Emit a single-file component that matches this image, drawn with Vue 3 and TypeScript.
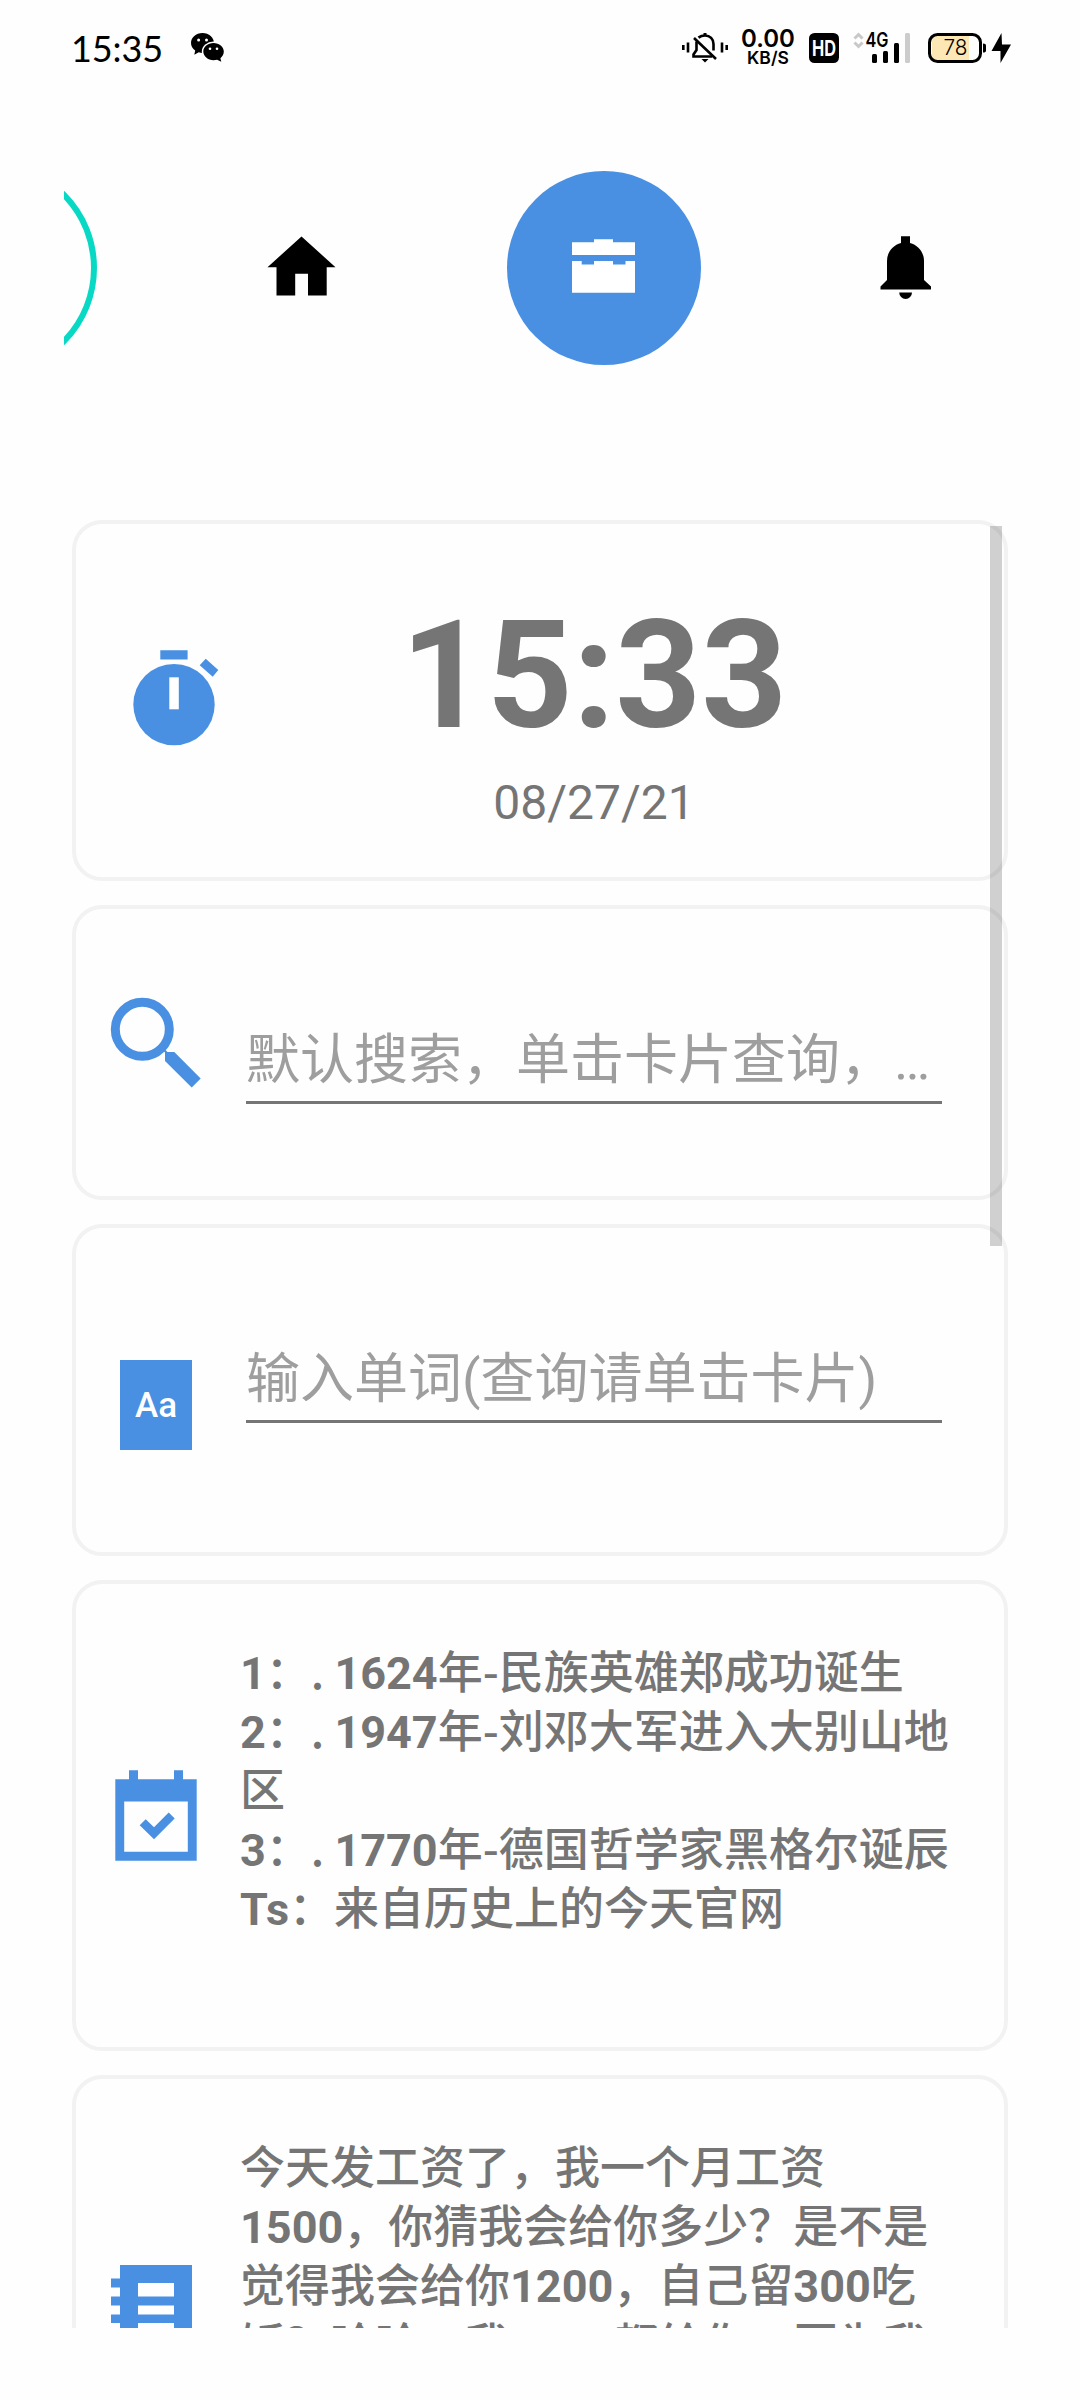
<script setup lang="ts">
interface Segment {
  text: string
  strong: boolean
}

// Latin letters and digits are set bold, everything else keeps the medium CJK face.
function segments(line: string): Segment[] {
  return (line.match(/[A-Za-z0-9]+|[^A-Za-z0-9]+/g) ?? []).map((text) => ({
    text,
    strong: /[A-Za-z0-9]/.test(text),
  }))
}

const history: Segment[][] = [
  '1：. 1624年-民族英雄郑成功诞生',
  '2：. 1947年-刘邓大军进入大别山地',
  '区',
  '3：. 1770年-德国哲学家黑格尔诞辰',
  'Ts：来自历史上的今天官网',
].map(segments)

const joke: Segment[][] = [
  '今天发工资了，我一个月工资',
  '1500，你猜我会给你多少？是不是',
  '觉得我会给你1200，自己留300吃',
  '饭？哈哈，我1500都给你，因为我',
].map(segments)
</script>

<template>
  <div class="screen">
    <header class="status">
      <span class="clock">15:35</span>
      <svg class="wechat" width="36" height="32" viewBox="0 0 36 32">
        <path d="M12.500 1C6 1 1 5.500 1 11c0 3.200 1.600 5.800 4.200 7.600L4.300 22.800 8.800 20.300c1.200.4 2.400.6 3.700.6C19 20.900 24 16.400 24 11S19 1 12.500 1z" />
        <ellipse cx="23.500" cy="19.600" rx="11.700" ry="10" fill="#fff" />
        <path d="M23.500 11c-5.700 0-10.200 3.800-10.200 8.600s4.500 8.600 10.200 8.600c1.300 0 2.500-.2 3.600-.5l4.200 2-.9-3.500c2.100-1.600 3.400-3.900 3.400-6.600 0-4.800-4.600-8.600-10.300-8.600z" />
        <g fill="#fff">
          <circle cx="8.600" cy="8" r="1.500" /><circle cx="16.500" cy="8" r="1.500" />
          <circle cx="20" cy="16.800" r="1.300" /><circle cx="27" cy="16.800" r="1.300" />
        </g>
      </svg>

      <div class="indicators">
        <svg class="silent" width="46" height="32" viewBox="0 0 46 32">
          <g fill="none" stroke="#000" stroke-width="2.600">
            <path d="M1.300 13v5M6 10.500v10M40 10.500v10M44.700 13v5" />
            <path d="M16.500 5.600C18.300 4.200 20.500 3.500 23 3.500c5 0 8.500 3.600 8.500 8.500v6.500" />
            <path d="M14.500 9.500v8.500L11.500 22.500v2H30" />
            <path d="M12 6l22 21" />
          </g>
          <path d="M21.500 1h3v3h-3zM19.500 27h7l-3.500 3.500z" />
        </svg>
        <div class="speed"><b>0.00</b><i>KB/S</i></div>
        <svg class="hd" width="30" height="30" viewBox="0 0 30 30">
          <rect width="30" height="30" rx="5.500" />
          <text x="15" y="23" text-anchor="middle" textLength="24" lengthAdjust="spacingAndGlyphs" fill="#fff" font-size="22" font-weight="700">HD</text>
        </svg>
        <svg class="signal" width="58" height="34" viewBox="0 0 58 34">
          <path d="M1.500 7.500L5.500 3.500l4 4M1.500 11.500l4 4 4-4" fill="none" stroke="#c8c8c8" stroke-width="3" />
          <text x="12.500" y="16" textLength="23" lengthAdjust="spacingAndGlyphs" font-size="20" font-weight="600">4G</text>
          <rect x="19" y="23" width="5" height="9" rx="1.500" />
          <rect x="30" y="20" width="5" height="12" rx="1.500" />
          <rect x="41" y="12" width="5" height="20" rx="1.500" />
          <rect x="52" y="2" width="5" height="30" rx="1.500" fill="#ccc" />
        </svg>
        <svg class="battery" width="84" height="34" viewBox="0 0 84 34">
          <path d="M10 4h31v26H10a6 6 0 0 1-6-6V10a6 6 0 0 1 6-6z" fill="#fde7b5" />
          <rect x="1.500" y="3.500" width="51" height="27" rx="8" fill="none" stroke="#000" stroke-width="3" />
          <path d="M55 12.500q3 0 3 2v5q0 2-3 2z" />
          <text x="15.500" y="24" textLength="24" lengthAdjust="spacingAndGlyphs" font-size="21" font-weight="300">78</text>
          <path d="M73.500 2L63.500 20h9v12L83 13.500h-9z" />
        </svg>
      </div>
    </header>

    <nav class="tabs">
      <div class="tab first">
        <svg width="87" height="194" viewBox="0 0 87 194">
          <circle cx="-74" cy="97" r="104" fill="none" stroke="#08d9c4" stroke-width="6" />
        </svg>
      </div>
      <div class="tab">
        <svg width="96" height="96" viewBox="0 0 96 96">
          <path d="M47.500 16.500L81.500 47.200H72.700V75.600H54V53.700H41.200V75.600H22.500V47.200H13.500z" />
        </svg>
      </div>
      <div class="tab">
        <div class="bubble">
          <svg width="96" height="96" viewBox="0 0 96 96" fill="#fff">
            <path d="M16 22.300H38V19.300H57V22.300H79V35H16z" />
            <path d="M16 41H25.700V44.400H38V41H57V44.400H69.500V41H79V72.800H16z" />
          </svg>
        </div>
      </div>
      <div class="tab">
        <svg width="96" height="96" viewBox="0 0 96 96">
          <path d="M43 16.300H52V22.900C60 25 66 32 66 41V60L73 66.500V69.500H22.500V66.500L29 60V41C29 32 35 25 43 22.900z" />
          <path d="M41.200 72.500H54A6.400 6.400 0 0 1 41.200 72.500z" />
        </svg>
      </div>
    </nav>

    <main class="list">
      <section class="card card-time">
        <svg class="icon" width="108" height="108" viewBox="0 0 108 108">
          <path d="M40.300 10.300h27.300v9.200H40.300zM85.700 18.700L98.300 30l-5.600 6.700L79.700 25.300z" />
          <circle cx="54" cy="64.600" r="40.700" />
          <path d="M49.300 37.300h9.500v32h-9.500z" fill="#fff" />
        </svg>
        <div class="time">
          <strong>15:33</strong>
          <span>08/27/21</span>
        </div>
      </section>

      <section class="card card-search">
        <svg class="icon" width="108" height="108" viewBox="0 0 108 108">
          <circle cx="40.300" cy="49.300" r="27" fill="none" stroke="#4990e2" stroke-width="9" />
          <path d="M60 69.500L63 72.500V81L89.700 107.500 98.700 98.600 72.300 72H65.500L62.500 69z" />
        </svg>
        <div class="field">默认搜索，单击卡片查询，…</div>
      </section>

      <section class="card card-word">
        <div class="dict">Aa</div>
        <div class="field">输入单词(查询请单击卡片)</div>
      </section>

      <section class="card card-history">
        <svg class="icon" width="108" height="108" viewBox="0 0 108 108">
          <path fill-rule="evenodd" d="M13.300 19.300H27V10.300H36V19.300H72V10.300H81V19.300H94.700V100.700H13.300zM22.200 41.600V91.700H85.800V41.600z" />
          <path d="M37.700 65.300L43.700 59.300 52 67.300 66.700 52.500 72.700 58.600 52 79.300z" />
        </svg>
        <div class="text">
          <p v-for="(line, i) in history" :key="i">
            <span v-for="(s, j) in line" :key="j" :class="{ strong: s.strong }">{{ s.text }}</span>
          </p>
        </div>
      </section>

      <section class="card card-joke">
        <svg class="icon" width="108" height="108" viewBox="0 0 108 108">
          <path fill-rule="evenodd" d="M18 8H90V98H18V84H9V75H18V66H9V57.500H18V48.500H9V39.500H18V30.500H9V21.500H18zM36 26V39.500H72V26zM36 48.500V57.500H72V48.500zM36 66V80H72V66z" />
        </svg>
        <div class="text">
          <p v-for="(line, i) in joke" :key="i">
            <span v-for="(s, j) in line" :key="j" :class="{ strong: s.strong }">{{ s.text }}</span>
          </p>
        </div>
      </section>

      <div class="scrollbar"></div>
    </main>
  </div>
</template>

<style>
body {
  background: #fefefe;
}
</style>

<style scoped>
.screen {
  width: 1080px;
  height: 2400px;
  overflow: hidden;
  display: flex;
  flex-direction: column;
  background: #fefefe;
  font-family: Roboto, 'Noto Sans CJK SC', sans-serif;
}

.status {
  height: 96px;
  flex: none;
  box-sizing: border-box;
  padding: 0 68px 0 71px;
  display: flex;
  align-items: center;
  color: #000;
}
.clock {
  width: 92px;
  font: 36px/44px Lato, sans-serif;
  letter-spacing: -0.1px;
}
.wechat {
  margin-left: 27px;
}
.indicators {
  margin-left: auto;
  display: flex;
  align-items: center;
  font-family: Inter, Roboto, sans-serif;
}
.speed {
  width: 56px;
  margin: 0 1px 0 12px;
  display: flex;
  flex-direction: column;
  align-items: center;
  white-space: nowrap;
}
.speed b {
  font-weight: 600;
  font-size: 24px;
  line-height: 20px;
}
.speed i {
  font-style: normal;
  font-weight: 600;
  font-size: 17.500px;
  line-height: 18px;
}
.hd {
  margin-left: 12px;
}
.signal {
  margin-left: 14px;
}
.battery {
  margin-left: 17px;
}

.tabs {
  flex: none;
  margin: 75px 0 0 64px;
  width: 952px;
  height: 194px;
  display: flex;
  overflow: hidden;
}
.tab {
  flex: none;
  width: 302px;
  display: flex;
  align-items: center;
  justify-content: center;
}
.tab.first {
  width: 87px;
}
.bubble {
  width: 194px;
  height: 194px;
  border-radius: 50%;
  background: #4990e2;
  display: flex;
  align-items: center;
  justify-content: center;
}

.list {
  position: relative;
  flex: none;
  margin-top: 155px;
  padding: 0 72px;
  height: 1808px;
  overflow: hidden;
  display: flex;
  flex-direction: column;
  gap: 24px;
}
.card {
  flex: none;
  box-sizing: border-box;
  border: 4px solid #f2f2f2;
  border-radius: 30px;
  display: flex;
  align-items: flex-start;
  color: #757575;
}
.card-time {
  height: 361px;
}
.card-search {
  height: 295px;
}
.card-word {
  height: 332px;
}
.card-history {
  height: 471px;
}
.card-joke {
  height: 471px;
}
.icon {
  flex: none;
  fill: #4990e2;
  margin-left: 26px;
}
.card-time .icon {
  margin: 116px 0 0 44px;
}
.card-search .icon {
  margin-top: 71px;
}
.card-history .icon {
  margin-top: 176px;
}
.card-joke .icon {
  margin-top: 178px;
}

.time {
  width: 600px;
  margin: 77px 0 0 66px;
  display: flex;
  flex-direction: column;
  align-items: center;
}
.time strong {
  font-size: 150px;
  line-height: 150px;
  font-weight: 700;
}
.time span {
  margin-top: 24px;
  font-size: 48px;
  line-height: 56px;
}

.field {
  box-sizing: border-box;
  width: 696px;
  height: 86px;
  padding-top: 4px;
  border-bottom: 3px solid #757575;
  color: #9e9e9e;
  font-size: 54px;
  line-height: 78px;
  white-space: nowrap;
}
.card-search .field {
  margin: 109px 0 0 36px;
}
.card-word .field {
  margin: 109px 0 0 54px;
}
.dict {
  flex: none;
  width: 72px;
  height: 90px;
  margin: 132px 0 0 44px;
  background: #4990e2;
  color: #fff;
  font-size: 35px;
  font-weight: 500;
  line-height: 91px;
  text-align: center;
}

.text {
  margin: 56px 0 0 30px;
  font-size: 45px;
  font-weight: 500;
  white-space: nowrap;
  font-family: 'Noto Sans CJK SC', sans-serif;
}
.text p {
  margin: 0;
  height: 59px;
  line-height: 59px;
}
.strong {
  font-family: Roboto, sans-serif;
  font-weight: 700;
}

.scrollbar {
  position: absolute;
  top: 6px;
  left: 990px;
  width: 12px;
  height: 720px;
  background: rgba(0, 0, 0, 0.18);
}
</style>
